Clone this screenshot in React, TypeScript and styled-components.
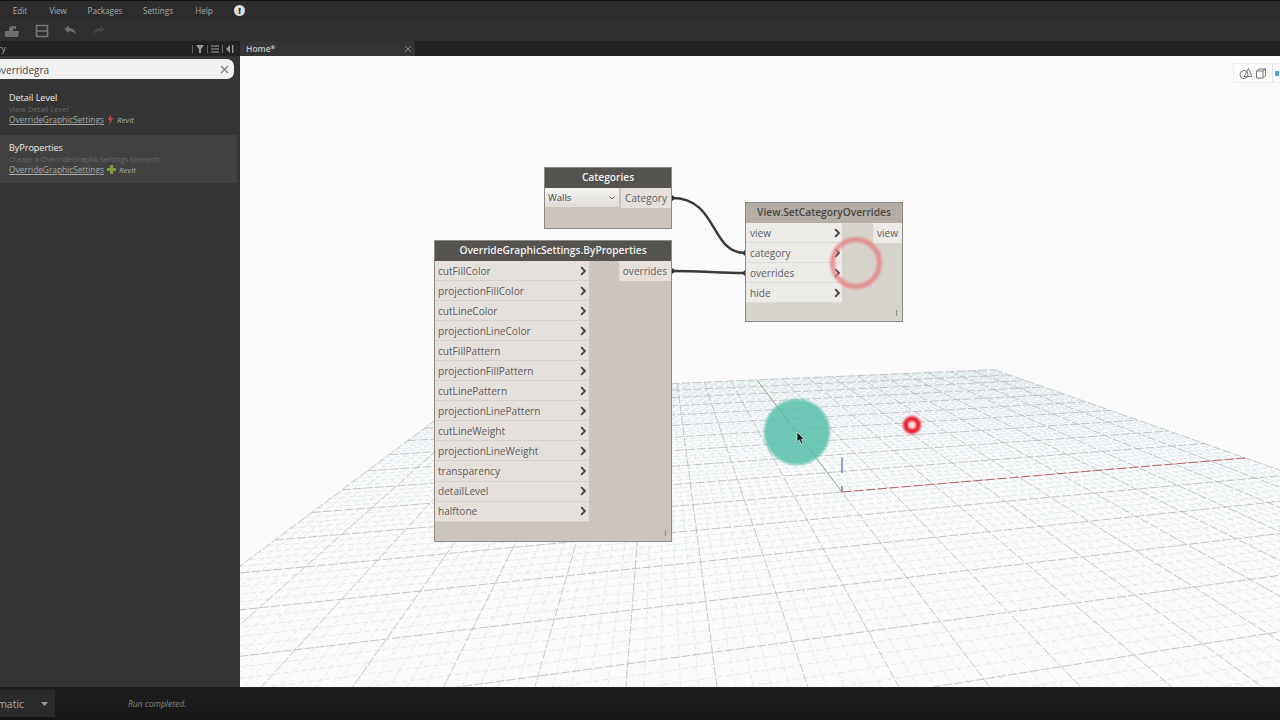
import React from 'react'
import styled, { createGlobalStyle } from 'styled-components'

const GlobalStyle = createGlobalStyle`
  html, body, #root {
    margin: 0;
    height: 100%;
  }
  body {
    font-family: "Open Sans", "Liberation Sans", sans-serif;
    overflow: hidden;
    background: #181818;
  }
`

const inputs = ['cutFillColor', 'projectionFillColor', 'cutLineColor', 'projectionLineColor', 'cutFillPattern', 'projectionFillPattern', 'cutLinePattern', 'projectionLinePattern', 'cutLineWeight', 'projectionLineWeight', 'transparency', 'detailLevel', 'halftone']

// ground plane as seen in the background preview: origin + two vanishing points
const O = [842, 492]
const VX = [3630, 256]
const VY = [660, 252]
const G = 0.169
const H = 0.876

const project = (u: number, v: number) => {
  const w = 1 + G * u + H * v
  const x = (O[0] + G * u * VX[0] + H * v * VY[0]) / w
  const y = (O[1] + G * u * VX[1] + H * v * VY[1]) / w
  return [x - 240, y - 56]
}

const gridLine = (u0: number, v0: number, u1: number, v1: number) => {
  const a = project(u0, v0)
  const b = project(u1, v1)
  return `M${a[0].toFixed(1)} ${a[1].toFixed(1)}L${b[0].toFixed(1)} ${b[1].toFixed(1)}`
}

const buildGrid = (major: boolean) => {
  let d = ''
  const steps = 50
  for (let i = -steps; i <= steps; i++) {
    if ((i % 5 === 0) !== major) continue
    const t = i / steps
    const vNear = -(1 + G * t - 0.12) / H
    d += gridLine(t, 1, t, vNear)
    if (t >= -0.9) d += gridLine(-1, t, 1, t)
  }
  return d
}

const GroundPlane: React.FC = () => (
  <PlaneSvg viewBox="0 0 1040 631">
    <path d={buildGrid(false)} stroke="#d6e3e8" strokeWidth="0.7" fill="none" strokeDasharray="6 3" />
    <path d={buildGrid(true)} stroke="#aab0b4" strokeWidth="0.7" fill="none" strokeDasharray="9 2" />
    <path d="M517 324L602 436" stroke="#7fa67f" strokeWidth="0.8" fill="none" />
    <path d="M602 436L1005 402" stroke="#c8505a" strokeWidth="0.9" strokeDasharray="9 3" fill="none" />
    <path d="M602 402V417M602 430V436" stroke="#5a62a8" strokeWidth="1.2" fill="none" />
  </PlaneSvg>
)

const Chevron: React.FC = () => (
  <svg width="7" height="10" viewBox="0 0 7 10">
    <path d="M1.2 1.2L4.9 5L1.2 8.8" stroke="#444" strokeWidth="1.9" fill="none" />
  </svg>
)

const App: React.FC = () => {
  return (
    <Page>
      <GlobalStyle />
      <MenuBar>
        <MenuItem $w={36}>Edit</MenuItem>
        <MenuItem $w={40}>View</MenuItem>
        <MenuItem $w={54}>Packages</MenuItem>
        <MenuItem $w={52}>Settings</MenuItem>
        <MenuItem $w={40}>Help</MenuItem>
        <NoticeIcon>!</NoticeIcon>
      </MenuBar>

      <ToolBar>
        <svg width="16" height="14" viewBox="0 0 16 14"><path d="M1 7H5V3.5L7 2H12V5H9V7H15L14 13H1Z" fill="#6e6e6e" /></svg>
        <svg width="14" height="14" viewBox="0 0 14 14"><path d="M1.5 1.5H12.5V12.5H1.5ZM1.5 7H12.5" fill="none" stroke="#777" strokeWidth="1.6" /></svg>
        <svg width="14" height="12" viewBox="0 0 14 12"><path d="M1 4L6 0.8V3C10 3 12.5 5.5 13 10C11.5 7.5 9.5 6.2 6 6V8Z" fill="#707070" /></svg>
        <svg width="14" height="12" viewBox="0 0 14 12"><path d="M13 4L8 0.8V3C4 3 1.5 5.5 1 10C2.5 7.5 4.5 6.2 8 6V8Z" fill="#444" /></svg>
      </ToolBar>

      <Main>
        <Sidebar>
          <LibraryHeader>
            <LibraryTitle>Library</LibraryTitle>
            <LibraryTools>
              <ToolDivider />
              <svg width="8" height="8" viewBox="0 0 8 8"><path d="M0 0H8L5 4V8H3V4Z" fill="#9a9a9a" /></svg>
              <ToolDivider />
              <svg width="8" height="8" viewBox="0 0 8 8"><path d="M0 1H8M0 4H8M0 7H8" stroke="#777" strokeWidth="1.4" /></svg>
              <ToolDivider />
              <svg width="8" height="8" viewBox="0 0 8 8"><path d="M4 0V8L0 4ZM6 0H7.4V8H6Z" fill="#9a9a9a" /></svg>
            </LibraryTools>
          </LibraryHeader>

          <SearchBox>
            <SearchText>overridegra</SearchText>
            <svg width="9" height="9" viewBox="0 0 9 9"><path d="M1 1L8 8M8 1L1 8" stroke="#777" strokeWidth="1.1" /></svg>
          </SearchBox>

          <ResultItem>
            <ResultName>Detail Level</ResultName>
            <ResultDescription>View Detail Level</ResultDescription>
            <ResultPath>
              <ResultClass>OverrideGraphicSettings</ResultClass>
              <svg width="7" height="11" viewBox="0 0 7 11"><path d="M4 0L0.8 6H3L2 11L6.4 4H4Z" fill="#b5474f" /></svg>
              <ResultPackage>Revit</ResultPackage>
            </ResultPath>
          </ResultItem>

          <ResultItem $active>
            <ResultName>ByProperties</ResultName>
            <ResultDescription>Create a OverrideGraphicSettings Element.</ResultDescription>
            <ResultPath>
              <ResultClass>OverrideGraphicSettings</ResultClass>
              <svg width="9" height="9" viewBox="0 0 9 9"><path d="M3 0H6V3H9V6H6V9H3V6H0V3H3Z" fill="#7d9a3d" /></svg>
              <ResultPackage>Revit</ResultPackage>
            </ResultPath>
          </ResultItem>
        </Sidebar>

        <Workspace>
          <TabStrip>
            <Tab>
              <span>Home*</span>
              <svg width="8" height="8" viewBox="0 0 8 8"><path d="M1 1L7 7M7 1L1 7" stroke="#888" strokeWidth="1" /></svg>
            </Tab>
          </TabStrip>

          <Canvas>
            <GroundPlane />

            <ViewToggle>
              <ToggleCell $w={38}>
                <svg width="28" height="14" viewBox="0 0 28 14">
                  <circle cx="5" cy="8.5" r="4" fill="none" stroke="#777" />
                  <path d="M5 10.5L9.5 2.5L13 10.5Z" fill="none" stroke="#777" />
                  <path d="M17.5 5H24V12H17.5ZM17.5 5L20 3H26.5V10L24 12M24 5L26.5 3" fill="none" stroke="#777" />
                </svg>
              </ToggleCell>
              <ToggleCell $w={8}><BlueMark /></ToggleCell>
            </ViewToggle>

            <Wires viewBox="0 0 1040 631">
              <path d="M432 142C478 142 470 197 505 197" stroke="#3a3a3a" strokeWidth="2.4" fill="none" />
              <path d="M432 215C460 215 480 217 505 217" stroke="#3a3a3a" strokeWidth="2.4" fill="none" />
              <path d="M432 139L436 142L432 145ZM432 212L436 215L432 218ZM505 194L502 197L505 200ZM505 214L502 217L505 220Z" fill="#333" />
            </Wires>

            <Node $x={304} $y={111} $w={128}>
              <NodeHeader>Categories</NodeHeader>
              <NodeBody $h={40}>
                <InputColumn>
                  <Dropdown>
                    Walls
                    <svg width="6" height="4" viewBox="0 0 6 4"><path d="M0.5 0.5L3 3L5.5 0.5" stroke="#555" fill="none" /></svg>
                  </Dropdown>
                </InputColumn>
                <OutputColumn>
                  <OutputPort>Category</OutputPort>
                </OutputColumn>
              </NodeBody>
            </Node>

            <Node $x={194} $y={184} $w={238}>
              <NodeHeader>OverrideGraphicSettings.ByProperties</NodeHeader>
              <NodeBody $h={280}>
                <InputColumn $w={154}>
                  {inputs.map(name => (
                    <InputPort key={name}>
                      {name}
                      <Chevron />
                    </InputPort>
                  ))}
                </InputColumn>
                <OutputColumn>
                  <OutputPort>overrides</OutputPort>
                </OutputColumn>
                <Grip />
              </NodeBody>
            </Node>

            <Node $x={505} $y={146} $w={158}>
              <NodeHeader $light>View.SetCategoryOverrides</NodeHeader>
              <NodeBody $h={98} $light>
                <InputColumn $w={96}>
                  {['view', 'category', 'overrides', 'hide'].map(name => (
                    <InputPort key={name} $light>
                      {name}
                      <Chevron />
                    </InputPort>
                  ))}
                </InputColumn>
                <OutputColumn>
                  <OutputPort $light>view</OutputPort>
                </OutputColumn>
                <Grip />
              </NodeBody>
            </Node>

            <ClickRing />
            <ClickSpot />
            <RedDot />
            <Cursor width="10" height="15" viewBox="0 0 10 15">
              <path d="M1 1V11L3.4 8.8L5.2 13L7 12.2L5.2 8.2H8.4Z" fill="#111" stroke="#eee" strokeWidth="0.7" />
            </Cursor>
          </Canvas>
        </Workspace>
      </Main>

      <StatusBar>
        <RunMode>
          <RunModeText>Automatic</RunModeText>
          <svg width="7" height="4" viewBox="0 0 7 4"><path d="M0 0H7L3.5 4Z" fill="#999" /></svg>
        </RunMode>
        <RunStatus>Run completed.</RunStatus>
      </StatusBar>
    </Page>
  )
}

export default App

const Page = styled.div`
  display: flex;
  flex-direction: column;
  width: 1280px;
  height: 720px;
  overflow: hidden;
`

const MenuBar = styled.div`
  display: flex;
  align-items: center;
  flex: 0 0 20px;
  box-sizing: border-box;
  padding-left: 2px;
  background: #2c2c2c;
  border-top: 1px solid #111;
  color: #aaa;
  font-size: 8.1px;
`

const MenuItem = styled.div<{ $w: number }>`
  width: ${p => p.$w}px;
  text-align: center;
`

const NoticeIcon = styled.div`
  width: 11px;
  height: 11px;
  margin-left: 10px;
  border-radius: 50%;
  background: #ddd;
  color: #2c2c2c;
  font-size: 9px;
  font-weight: 800;
  line-height: 11px;
  text-align: center;
`

const ToolBar = styled.div`
  display: flex;
  align-items: center;
  gap: 14.5px;
  flex: 0 0 21px;
  padding-left: 4px;
  background: #2f2f2f;
`

const Main = styled.div`
  display: flex;
  flex: 0 0 646px;
`

const Sidebar = styled.div`
  display: flex;
  flex-direction: column;
  flex: 0 0 240px;
  background: #353535;
  overflow: hidden;
`

const LibraryHeader = styled.div`
  display: flex;
  align-items: center;
  justify-content: space-between;
  flex: 0 0 15px;
  padding-right: 6px;
  background: #222;
  color: #aaa;
  font-size: 8.5px;
`

const LibraryTitle = styled.div`
  margin-left: -22px;
`

const LibraryTools = styled.div`
  display: flex;
  align-items: center;
  gap: 3px;
`

const ToolDivider = styled.div`
  width: 1px;
  height: 8px;
  background: #666;
`

const SearchBox = styled.div`
  display: flex;
  align-items: center;
  justify-content: space-between;
  box-sizing: border-box;
  width: 234px;
  height: 20px;
  margin-top: 3px;
  padding-right: 5px;
  background: #f1f1f1;
  border-radius: 0 7px 7px 0;
`

const SearchText = styled.div`
  margin-left: -5px;
  padding-top: 1px;
  color: #444;
  font-size: 10px;
`

const ResultItem = styled.div<{ $active?: boolean }>`
  display: flex;
  flex-direction: column;
  box-sizing: border-box;
  flex: 0 0 ${p => (p.$active ? 48 : 49)}px;
  width: 237px;
  margin-top: ${p => (p.$active ? 0 : 7)}px;
  padding: ${p => (p.$active ? 7 : 6)}px 0 0 9px;
  background: ${p => (p.$active ? '#414141' : 'transparent')};
`

const ResultName = styled.div`
  height: 12px;
  color: #eee;
  font-size: 9px;
  line-height: 12px;
`

const ResultDescription = styled.div`
  height: 10px;
  color: #676767;
  font-size: 7.65px;
  line-height: 11px;
`

const ResultPath = styled.div`
  display: flex;
  align-items: center;
  gap: 3px;
  height: 13px;
  margin-top: -1px;
  color: #aaa;
  font-size: 8.3px;
`

const ResultClass = styled.span`
  text-decoration: underline;
`

const ResultPackage = styled.span`
  font-size: 8px;
  font-style: italic;
`

const Workspace = styled.div`
  display: flex;
  flex-direction: column;
  flex: 1;
  min-width: 0;
`

const TabStrip = styled.div`
  display: flex;
  flex: 0 0 15px;
  background: #222;
`

const Tab = styled.div`
  display: flex;
  align-items: center;
  justify-content: space-between;
  box-sizing: border-box;
  width: 175px;
  padding: 0 3px 0 6px;
  background: #353535;
  color: #c4c4c4;
  font-size: 8.5px;
  font-weight: 600;
`

const Canvas = styled.div`
  position: relative;
  flex: 1;
  background: #fafafa;
  overflow: hidden;
`

const PlaneSvg = styled.svg`
  position: absolute;
  left: 0;
  top: 0;
  width: 1040px;
  height: 631px;
  filter: blur(0.3px);
`

const Wires = styled(PlaneSvg)`
  filter: none;
`

const ViewToggle = styled.div`
  position: absolute;
  left: 993px;
  top: 7px;
  display: flex;
  height: 18px;
  background: #fcfcfc;
  border: 1px solid #eee;
`

const ToggleCell = styled.div<{ $w: number }>`
  display: flex;
  align-items: center;
  justify-content: center;
  width: ${p => p.$w}px;
  border-right: 1px solid #e4e4e4;
`

const BlueMark = styled.div`
  width: 4px;
  height: 5px;
  background: #4fa3d8;
`

const Node = styled.div<{ $x: number; $y: number; $w: number }>`
  position: absolute;
  left: ${p => p.$x}px;
  top: ${p => p.$y}px;
  width: ${p => p.$w}px;
  box-sizing: border-box;
  border: 1px solid #8d8a86;
`

const NodeHeader = styled.div<{ $light?: boolean }>`
  height: 20px;
  background: ${p => (p.$light ? '#b5aea6' : '#555350')};
  color: ${p => (p.$light ? '#454545' : '#f2f2f2')};
  font-size: 10.2px;
  font-weight: 600;
  line-height: 19px;
  text-align: center;
  white-space: nowrap;
`

const NodeBody = styled.div<{ $h: number; $light?: boolean }>`
  position: relative;
  display: flex;
  justify-content: space-between;
  align-items: flex-start;
  height: ${p => p.$h}px;
  background: ${p => (p.$light ? '#d6d2cc' : '#cbc5bd')};
`

const InputColumn = styled.div<{ $w?: number }>`
  display: flex;
  flex-direction: column;
  width: ${p => (p.$w ? `${p.$w}px` : 'auto')};
`

const OutputColumn = styled.div`
  display: flex;
  flex-direction: column;
`

const InputPort = styled.div<{ $light?: boolean }>`
  display: flex;
  align-items: center;
  justify-content: space-between;
  box-sizing: border-box;
  height: 20.05px;
  padding: ${p => (p.$light ? '0 1px 0 4px' : '0 2px 0 3px')};
  background: ${p => (p.$light ? '#ecebe8' : '#e6e0dd')};
  border-bottom: 1px solid ${p => (p.$light ? '#dcdad6' : '#d6d0cc')};
  color: #5c5c5c;
  font-size: 10.1px;
`

const OutputPort = styled.div<{ $light?: boolean }>`
  box-sizing: border-box;
  height: 20px;
  padding: 0 4px;
  background: ${p => (p.$light ? '#ecebe8' : '#e6e0dd')};
  color: #5c5c5c;
  font-size: 10.1px;
  line-height: 20px;
`

const Dropdown = styled.div`
  display: flex;
  align-items: center;
  justify-content: space-between;
  box-sizing: border-box;
  width: 75px;
  height: 19px;
  padding: 0 4px 0 3px;
  background: linear-gradient(#f4f3f1, #dfdcd8);
  border-right: 1px solid #c5c0ba;
  color: #444;
  font-size: 9.5px;
`

const Grip = styled.div`
  position: absolute;
  right: 5px;
  bottom: 5px;
  width: 1px;
  height: 6px;
  background: #8b8782;
`

const ClickRing = styled.div`
  position: absolute;
  left: 590px;
  top: 181px;
  box-sizing: border-box;
  width: 52px;
  height: 52px;
  border: 5px solid rgba(232, 130, 130, 0.8);
  border-radius: 50%;
  filter: blur(0.8px);
`

const ClickSpot = styled.div`
  position: absolute;
  left: 524px;
  top: 343px;
  width: 66px;
  height: 66px;
  background: rgba(82, 190, 168, 0.82);
  border-radius: 50%;
  filter: blur(0.8px);
`

const RedDot = styled.div`
  position: absolute;
  left: 663px;
  top: 360px;
  box-sizing: border-box;
  width: 18px;
  height: 18px;
  background: #f3dfe3;
  border: 5px solid #ee1c30;
  border-radius: 50%;
  filter: blur(0.8px);
`

const Cursor = styled.svg`
  position: absolute;
  left: 556px;
  top: 375px;
`

const StatusBar = styled.div`
  display: flex;
  align-items: center;
  flex: 1;
  background: linear-gradient(#1f1f1f, #151515);
  color: #888;
`

const RunMode = styled.div`
  display: flex;
  align-items: center;
  justify-content: space-between;
  box-sizing: border-box;
  width: 55px;
  height: 27px;
  padding-right: 7px;
  background: #2a2a2a;
  overflow: hidden;
`

const RunModeText = styled.div`
  margin-left: -26px;
  color: #aaa;
  font-size: 10.5px;
`

const RunStatus = styled.div`
  margin-left: 73px;
  font-size: 8.5px;
  font-style: italic;
`
